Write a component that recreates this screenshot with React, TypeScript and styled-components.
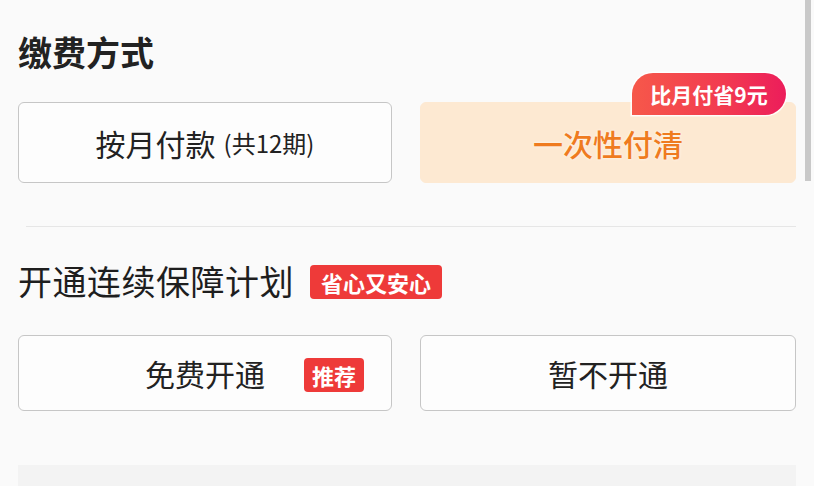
import styled, { createGlobalStyle } from "styled-components";

const GlobalStyle = createGlobalStyle`
  html, body {
    margin: 0;
    padding: 0;
    background: #fafafa;
  }
  body {
    font-family: "Noto Sans CJK SC", "Noto Sans", sans-serif;
    color: #222;
  }
`;

const App = () => {
  return (
    <Page>
      <GlobalStyle />
      <Scrollbar />
      <Title>缴费方式</Title>
      <CardRow>
        <Card>
          按月付款<Small>(共12期)</Small>
        </Card>
        <Card selected>
          <SaveBadge>比月付省9元</SaveBadge>
          <OrangeText>一次性付清</OrangeText>
        </Card>
      </CardRow>

      <Divider />

      <HeadRow>
        <Heading>开通连续保障计划</Heading>
        <Tag>省心又安心</Tag>
      </HeadRow>

      <CardRow short>
        <Card short>
          免费开通
          <SideTag>推荐</SideTag>
        </Card>
        <Card short>暂不开通</Card>
      </CardRow>

      <Footer />
    </Page>
  );
};

export default App;

const Page = styled.div`
  position: relative;
  width: 814px;
  height: 486px;
  overflow: hidden;
  box-sizing: border-box;
  padding: 32px 18px 0 18px;
  display: flex;
  flex-direction: column;
`;
const Scrollbar = styled.div`
  position: absolute;
  top: 0;
  right: 3px;
  width: 6px;
  height: 181px;
  background: #c9c9c9;
`;
const Title = styled.h1`
  margin: 0;
  font-size: 34px;
  line-height: 40px;
  font-weight: 700;
  color: #222;
`;
const CardRow = styled.div<{ short?: boolean }>`
  display: grid;
  grid-template-columns: 374px 376px;
  column-gap: 28px;
  margin-top: ${(p) => (p.short ? "34px" : "30px")};
`;
const Card = styled.div<{ selected?: boolean; short?: boolean }>`
  position: relative;
  height: ${(p) => (p.short ? "76px" : "81px")};
  box-sizing: border-box;
  border-radius: 6px;
  border: 1px solid ${(p) => (p.selected ? "#fde9d2" : "#c6c6c6")};
  background: ${(p) => (p.selected ? "#fde9d2" : "#fdfdfd")};
  display: flex;
  align-items: center;
  justify-content: center;
  font-size: 30px;
  color: #222;
`;
const Small = styled.span`
  font-size: 24px;
  margin-left: 8px;
`;
const OrangeText = styled.span`
  color: #ef7b1f;
  font-size: 30px;
  font-weight: 500;
  text-shadow: 0 0 3px rgba(255, 255, 255, 0.8);
`;
const SaveBadge = styled.div`
  position: absolute;
  top: -30px;
  right: 9px;
  width: 154px;
  height: 42px;
  box-sizing: border-box;
  border-radius: 21px 21px 21px 0;
  background: linear-gradient(90deg, #f6584a 0%, #f23a50 60%, #ec1d5b 100%);
  box-shadow: 0 0 0 1.5px rgba(255, 255, 255, 0.85);
  color: #fff;
  font-size: 21px;
  font-weight: 700;
  display: flex;
  align-items: center;
  justify-content: center;
`;
const Divider = styled.div`
  margin: 43px 0 0 8px;
  height: 1px;
  background: #e6e6e6;
`;
const HeadRow = styled.div`
  display: flex;
  align-items: center;
  gap: 16px;
  margin-top: 34px;
  height: 40px;
`;
const Heading = styled.h2`
  margin: 0;
  font-size: 34px;
  line-height: 40px;
  letter-spacing: 0.5px;
  font-weight: 400;
  color: #1e1e1e;
`;
const Tag = styled.span`
  display: inline-flex;
  align-items: center;
  justify-content: center;
  height: 34px;
  padding: 0 11px;
  border-radius: 4px;
  background: #ee3a39;
  color: #fff;
  font-size: 22px;
  font-weight: 700;
  margin-top: 2px;
`;
const SideTag = styled(Tag)`
  position: absolute;
  right: 27px;
  top: 22px;
  margin: 0;
  width: 60px;
  padding: 0;
`;
const Footer = styled.div`
  margin-top: 54px;
  flex: 1;
  background: #f3f3f3;
`;
